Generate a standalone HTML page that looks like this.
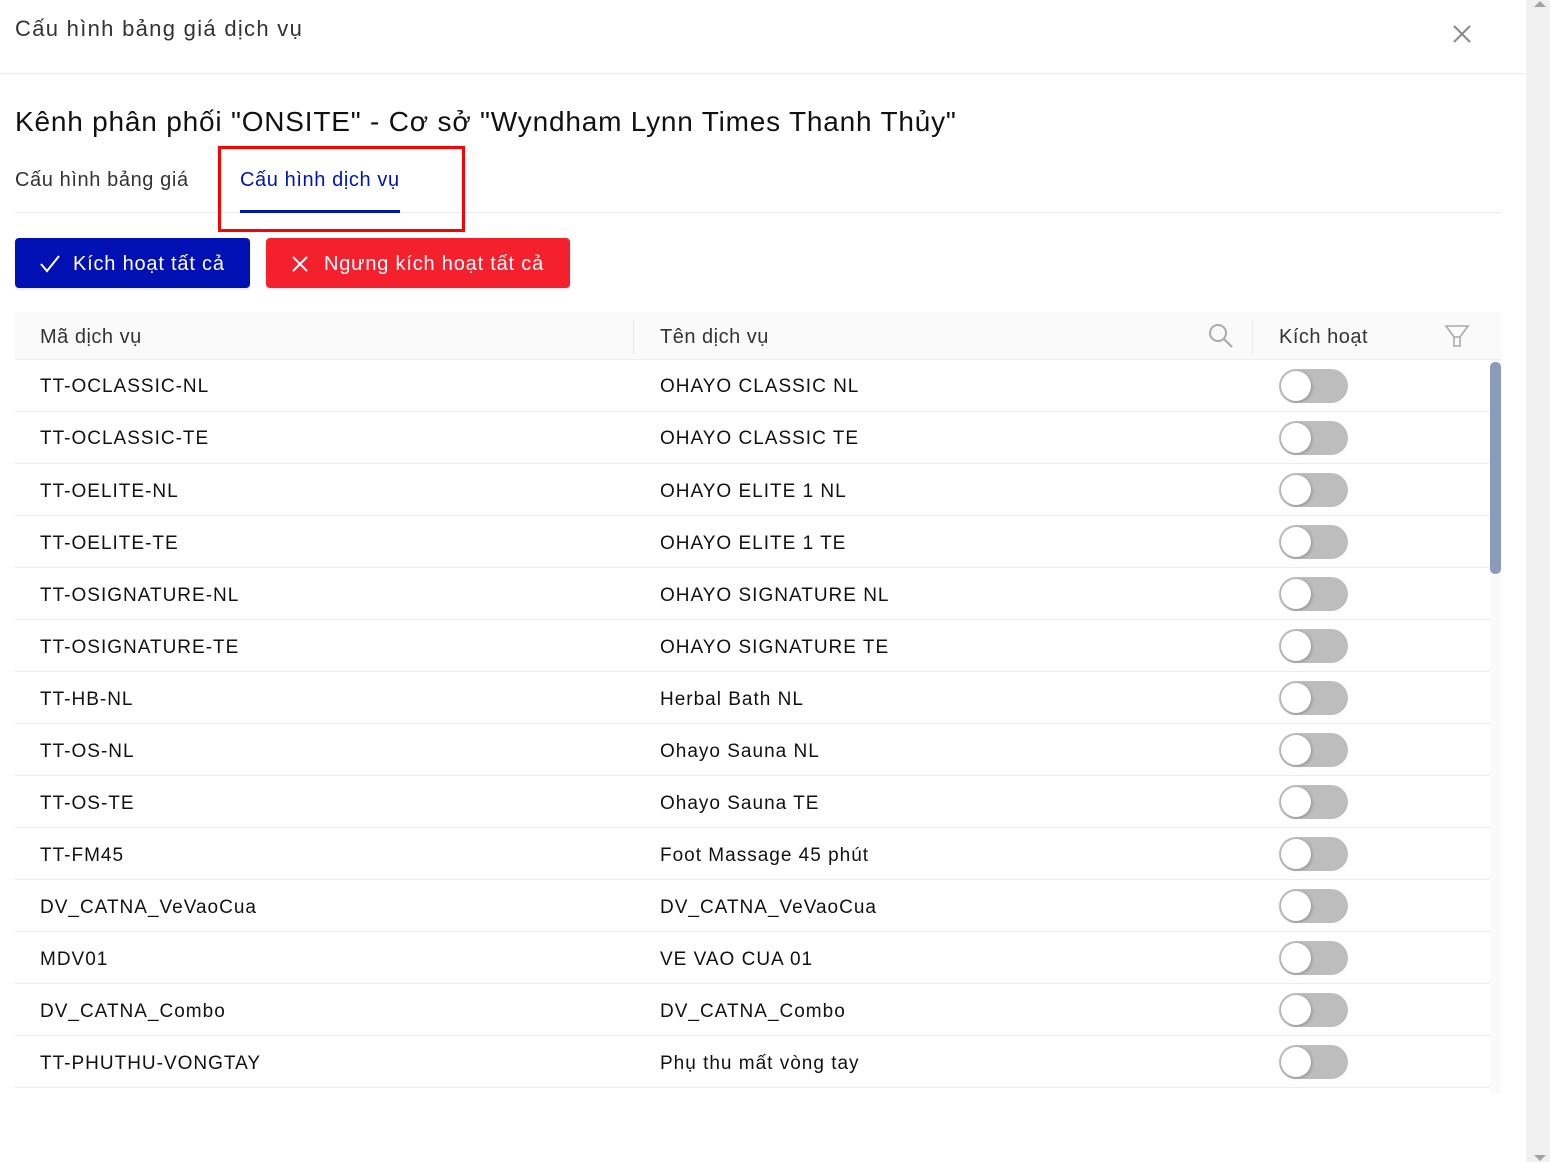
<!DOCTYPE html>
<html><head><meta charset="utf-8">
<style>
*{box-sizing:border-box;margin:0;padding:0}
body{width:1550px;height:1162px;background:#fff;font-family:"Liberation Sans","DejaVu Sans",sans-serif;color:#222;position:relative;overflow:hidden}
.abs{position:absolute}
.title{left:15px;top:16px;font-size:22px;color:#333;letter-spacing:1.3px}
.hdrline{left:0;top:73px;width:1526px;height:1px;background:#ececec}
.sub{left:15px;top:106px;font-size:28px;color:#111;letter-spacing:.8px;white-space:nowrap}
.tab1{left:15px;top:169px;font-size:20px;color:#333;letter-spacing:.6px}
.tab2{left:240px;top:169px;font-size:20px;color:#0015b0;letter-spacing:.6px}
.tabline{left:15px;top:212px;width:1486px;height:1px;background:#ececec}
.ink{left:240px;top:210px;width:160px;height:3px;background:#0015b0}
.redbox{left:218px;top:146px;width:247px;height:86px;border:3px solid #f00}
.btn{top:238px;height:50px;border-radius:4px;color:#fff;font-size:20px;display:flex;align-items:center;box-shadow:0 2px 2px rgba(0,0,0,.08);letter-spacing:.8px;padding-top:2px}
.b1{left:15px;width:235px;background:#0010b2;padding-left:24px}
.b2{left:266px;width:304px;background:#f5202d;padding-left:24px}
.th{left:15px;top:312px;width:1486px;height:48px;background:#fafafa;border-bottom:1px solid #eee}
.thtext{top:326px;font-size:20px;color:#333;letter-spacing:.5px}
.vsep{top:320px;width:1px;height:33px;background:#e6e6e6}
.row{left:15px;width:1475px;height:52px;border-bottom:1px solid #ececec}
.cell{font-size:19px;color:#111;letter-spacing:1px;white-space:nowrap;margin-top:2px}
.tg{left:1279px;width:69px;height:34px;border-radius:17px;background:#bdbdbd}
.tg::after{content:"";position:absolute;left:2px;top:2px;width:30px;height:30px;border-radius:50%;background:#fff;box-shadow:1px 1px 3px rgba(0,0,0,.25)}
.sbar{left:1526px;top:0;width:24px;height:1162px;background:#f1f1f1}
</style></head><body>
<div class="abs title">Cấu hình bảng giá dịch vụ</div>
<svg class="abs" style="left:1451px;top:23px" width="22" height="22" viewBox="0 0 22 22"><path d="M3 3L19 19M19 3L3 19" stroke="#888" stroke-width="2"/></svg>
<div class="abs hdrline"></div>
<div class="abs sub">Kênh phân phối "ONSITE" - Cơ sở "Wyndham Lynn Times Thanh Thủy"</div>
<div class="abs tab1">Cấu hình bảng giá</div>
<div class="abs tab2">Cấu hình dịch vụ</div>
<div class="abs tabline"></div>
<div class="abs ink"></div>
<div class="abs redbox"></div>
<div class="abs btn b1"><svg width="22" height="20" viewBox="0 0 22 20"><path d="M2 10l6 7L20 2" stroke="#fff" stroke-width="2" fill="none"/></svg><span style="margin-left:12px">Kích hoạt tất cả</span></div>
<div class="abs btn b2"><svg width="20" height="20" viewBox="0 0 20 20"><path d="M3 3L17 17M17 3L3 17" stroke="#fff" stroke-width="2"/></svg><span style="margin-left:14px">Ngưng kích hoạt tất cả</span></div>
<div class="abs th"></div>
<div class="abs thtext" style="left:40px">Mã dịch vụ</div>
<div class="abs vsep" style="left:633px"></div>
<div class="abs thtext" style="left:660px">Tên dịch vụ</div>
<svg class="abs" style="left:1207px;top:322px" width="28" height="28" viewBox="0 0 28 28"><circle cx="11" cy="11" r="8" stroke="#aaa" stroke-width="2" fill="none"/><path d="M17 17l8 8" stroke="#aaa" stroke-width="2"/></svg>
<div class="abs vsep" style="left:1252px"></div>
<div class="abs thtext" style="left:1279px">Kích hoạt</div>
<svg class="abs" style="left:1444px;top:324px" width="26" height="24" viewBox="0 0 26 24"><path d="M2 2h22l-8 11v9h-6v-9z" stroke="#aaa" stroke-width="1.6" fill="none"/><path d="M10 13h6" stroke="#aaa" stroke-width="1.6"/></svg>
<div class="abs" style="left:1490px;top:360px;width:11px;height:734px;background:#fafafa"></div>
<div class="abs" style="left:1490px;top:362px;width:11px;height:212px;border-radius:5px;background:#8a9ab9"></div>
<div class="abs sbar"></div>
<svg class="abs" style="left:1533px;top:0" width="14" height="8" viewBox="0 0 14 8"><path d="M1 7L7 1L13 7z" fill="#a3a3a3"/></svg>
<svg class="abs" style="left:1533px;top:1154px" width="14" height="8" viewBox="0 0 14 8"><path d="M1 1L7 7L13 1z" fill="#a3a3a3"/></svg>

<div class="abs row" style="top:360px"></div><div class="abs cell" style="left:40px;top:374px">TT-OCLASSIC-NL</div><div class="abs cell" style="left:660px;top:374px">OHAYO CLASSIC NL</div><div class="abs tg" style="top:369px"></div>
<div class="abs row" style="top:412px"></div><div class="abs cell" style="left:40px;top:426px">TT-OCLASSIC-TE</div><div class="abs cell" style="left:660px;top:426px">OHAYO CLASSIC TE</div><div class="abs tg" style="top:421px"></div>
<div class="abs row" style="top:464px"></div><div class="abs cell" style="left:40px;top:479px">TT-OELITE-NL</div><div class="abs cell" style="left:660px;top:479px">OHAYO ELITE 1 NL</div><div class="abs tg" style="top:473px"></div>
<div class="abs row" style="top:516px"></div><div class="abs cell" style="left:40px;top:531px">TT-OELITE-TE</div><div class="abs cell" style="left:660px;top:531px">OHAYO ELITE 1 TE</div><div class="abs tg" style="top:525px"></div>
<div class="abs row" style="top:568px"></div><div class="abs cell" style="left:40px;top:583px">TT-OSIGNATURE-NL</div><div class="abs cell" style="left:660px;top:583px">OHAYO SIGNATURE NL</div><div class="abs tg" style="top:577px"></div>
<div class="abs row" style="top:620px"></div><div class="abs cell" style="left:40px;top:635px">TT-OSIGNATURE-TE</div><div class="abs cell" style="left:660px;top:635px">OHAYO SIGNATURE TE</div><div class="abs tg" style="top:629px"></div>
<div class="abs row" style="top:672px"></div><div class="abs cell" style="left:40px;top:687px">TT-HB-NL</div><div class="abs cell" style="left:660px;top:687px">Herbal Bath NL</div><div class="abs tg" style="top:681px"></div>
<div class="abs row" style="top:724px"></div><div class="abs cell" style="left:40px;top:739px">TT-OS-NL</div><div class="abs cell" style="left:660px;top:739px">Ohayo Sauna NL</div><div class="abs tg" style="top:733px"></div>
<div class="abs row" style="top:776px"></div><div class="abs cell" style="left:40px;top:791px">TT-OS-TE</div><div class="abs cell" style="left:660px;top:791px">Ohayo Sauna TE</div><div class="abs tg" style="top:785px"></div>
<div class="abs row" style="top:828px"></div><div class="abs cell" style="left:40px;top:843px">TT-FM45</div><div class="abs cell" style="left:660px;top:843px">Foot Massage 45 phút</div><div class="abs tg" style="top:837px"></div>
<div class="abs row" style="top:880px"></div><div class="abs cell" style="left:40px;top:895px">DV_CATNA_VeVaoCua</div><div class="abs cell" style="left:660px;top:895px">DV_CATNA_VeVaoCua</div><div class="abs tg" style="top:889px"></div>
<div class="abs row" style="top:932px"></div><div class="abs cell" style="left:40px;top:947px">MDV01</div><div class="abs cell" style="left:660px;top:947px">VE VAO CUA 01</div><div class="abs tg" style="top:941px"></div>
<div class="abs row" style="top:984px"></div><div class="abs cell" style="left:40px;top:999px">DV_CATNA_Combo</div><div class="abs cell" style="left:660px;top:999px">DV_CATNA_Combo</div><div class="abs tg" style="top:993px"></div>
<div class="abs row" style="top:1036px"></div><div class="abs cell" style="left:40px;top:1051px">TT-PHUTHU-VONGTAY</div><div class="abs cell" style="left:660px;top:1051px">Phụ thu mất vòng tay</div><div class="abs tg" style="top:1045px"></div>
</body></html>
